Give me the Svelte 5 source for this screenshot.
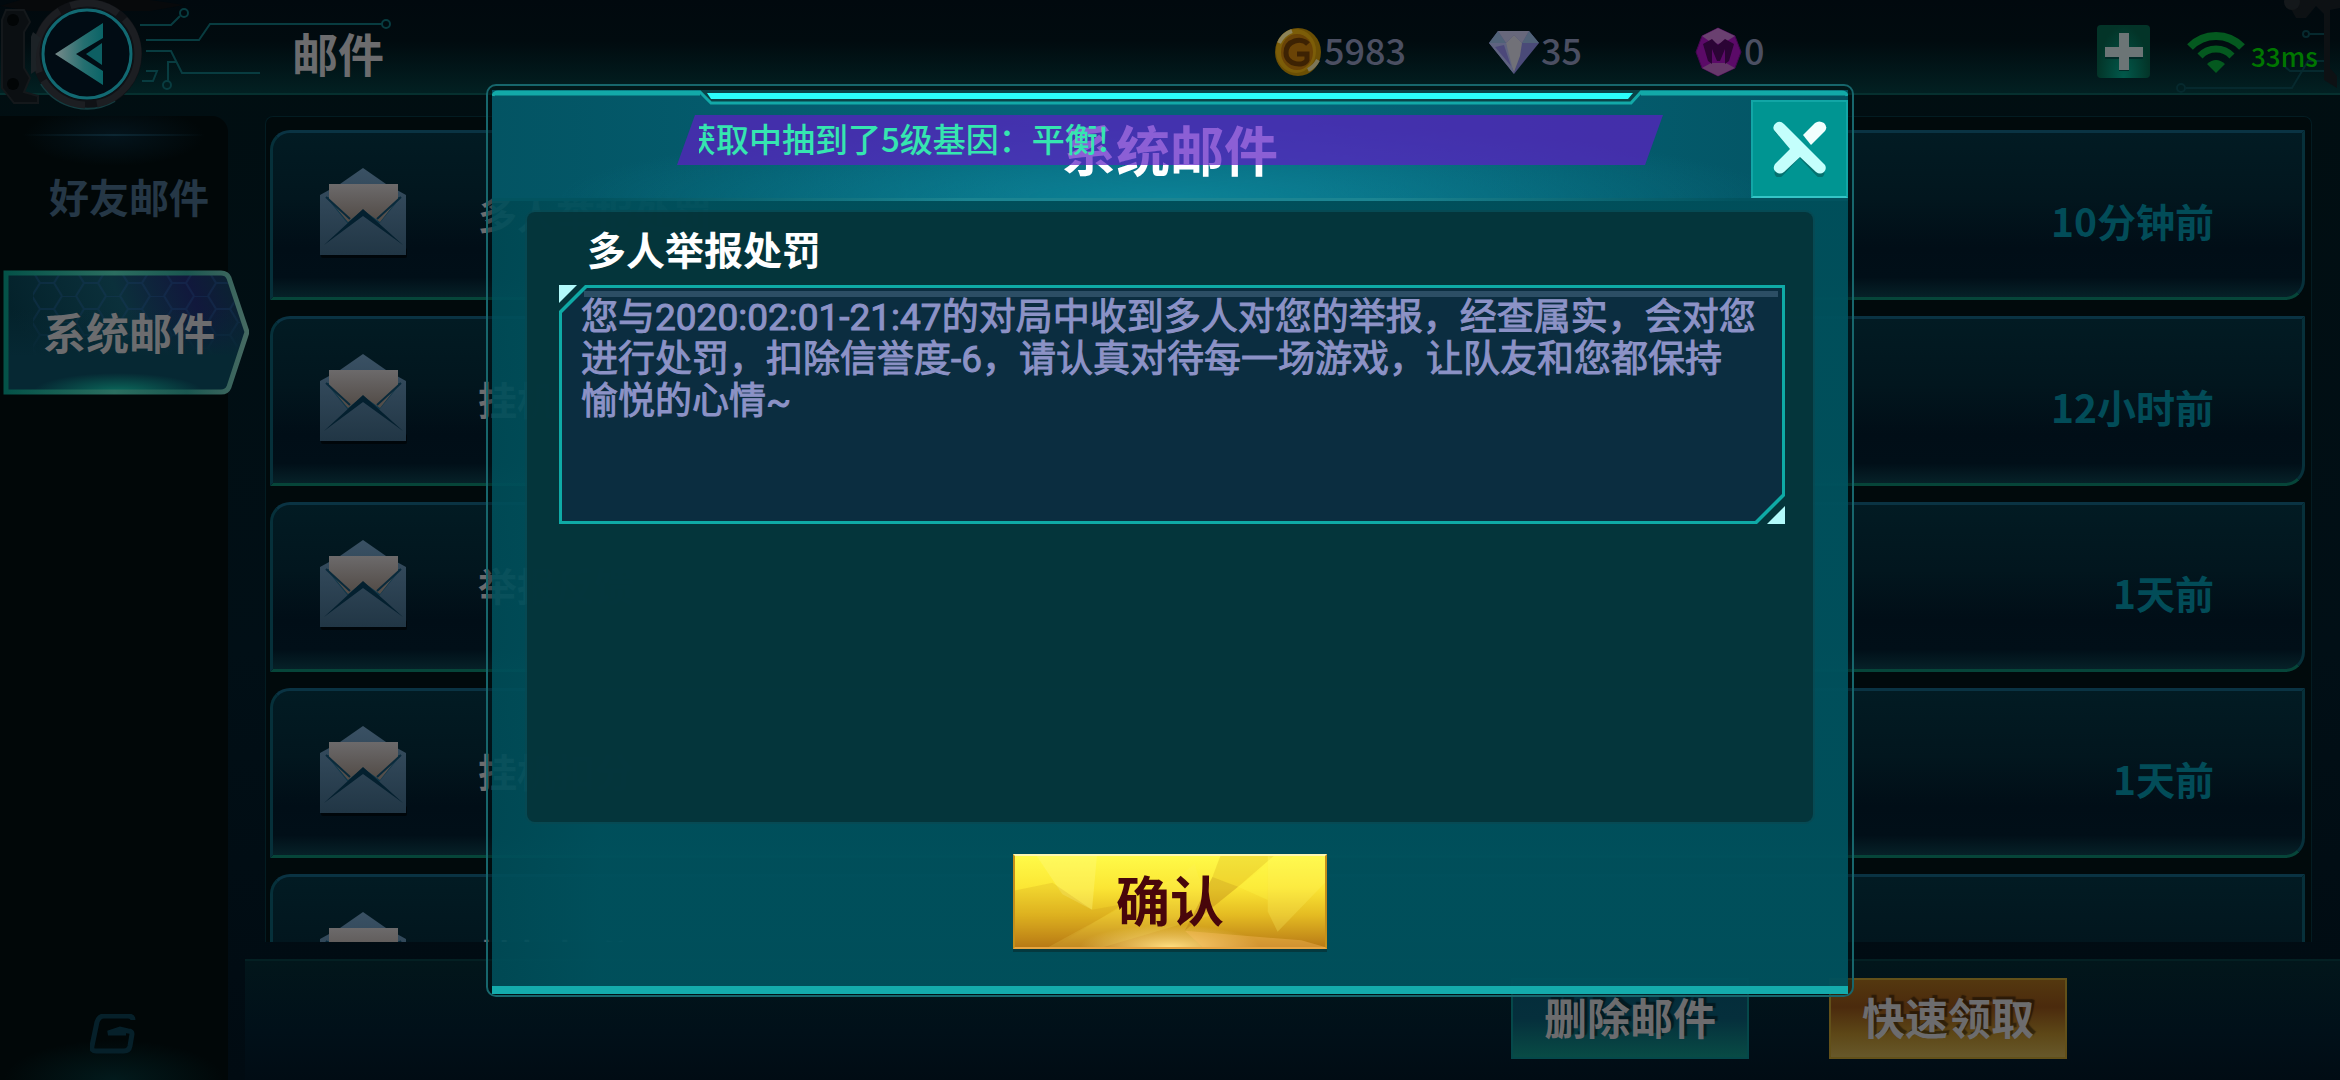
<script lang="ts">
  type Mail = { title: string; time: string };

  const mails: Mail[] = [
    { title: "多人举报处罚", time: "10分钟前" },
    { title: "挂机扣分", time: "12小时前" },
    { title: "举报反馈", time: "1天前" },
    { title: "挂机扣分", time: "1天前" },
    { title: "挂机扣分", time: "" },
  ];

  const tabs = ["好友邮件", "系统邮件"];

  const message =
    "您与2020:02:01-21:47的对局中收到多人对您的举报，经查属实，会对您\n" +
    "进行处罚，扣除信誉度-6，请认真对待每一场游戏，让队友和您都保持\n" +
    "愉悦的心情~";

  let activeTab = $state("系统邮件");
  let open = $state(true);

  function close() {
    open = false;
  }
</script>

<div class="screen">
  <header class="topbar">
    <svg class="circuit left" width="400" height="112" viewBox="0 0 400 112" aria-hidden="true">
      <path d="M0 6 L20 0 H150 L185 5 L150 11 H30 Z" fill="#07090b" />
      <path d="M6 10 L24 10 L30 22 L24 32 V68 L30 78 L24 92 L38 96 V103 H14 L2 88 V20 Z" fill="#0b0f12" stroke="#14181b" stroke-width="2" />
      <circle cx="13" cy="20" r="6" fill="#020506" />
      <circle cx="13" cy="84" r="6" fill="#020506" />
      <g fill="none" stroke="#083c40" stroke-width="2">
        <path d="M140 25 H171 L180 16" />
        <circle cx="184" cy="13" r="4" />
        <path d="M146 40 H199 L210 24 H382" />
        <circle cx="386" cy="24" r="4" />
        <path d="M146 51 H171 L182 73 H260" />
        <path d="M176 62 H168 V81" />
        <circle cx="167" cy="85" r="4" />
        <path d="M146 71 H157 L153 81 H142" />
      </g>
    </svg>

    <button class="back" aria-label="返回">
      <svg width="112" height="112" viewBox="0 0 112 112">
        <defs>
          <linearGradient id="arrow" x1="0" x2="1">
            <stop offset="0" stop-color="#788a8a" />
            <stop offset="0.6" stop-color="#256f70" />
            <stop offset="1" stop-color="#0a6467" />
          </linearGradient>
        </defs>
        <circle cx="56" cy="54" r="55" fill="#101216" />
        <path d="M10 84 A55 55 0 0 0 84 101" fill="none" stroke="#143c40" stroke-width="2" />
        <circle cx="56" cy="54" r="51" fill="none" stroke="#1c1e22" stroke-width="7" stroke-dasharray="70 12 50 9" />
        <path d="M2 32 L10 38 A50 50 0 0 0 6 70 L0 74 A56 56 0 0 1 2 32Z" fill="#1c2226" />
        <circle cx="56" cy="54" r="46" fill="#030c10" />
        <circle cx="56" cy="54" r="44" fill="#010c14" stroke="#126972" stroke-width="3" />
        <path d="M24 54 L72 23 V38 L45 54 L72 71 V85 Z" fill="url(#arrow)" />
        <path d="M55 54 L71 43 V65 Z" fill="#0d5f63" />
      </svg>
    </button>
    <h1>邮件</h1>

    <div class="currencies">
      <div class="currency">
        <svg width="48" height="50" viewBox="0 0 48 50" aria-hidden="true">
          <ellipse cx="24" cy="25" rx="23" ry="24" fill="#6b4f04" />
          <ellipse cx="22" cy="24" rx="20" ry="22" fill="#7c5d08" />
          <ellipse cx="23" cy="25" rx="16" ry="18" fill="#6a4306" />
          <path d="M5 16 A22 23 0 0 1 18 4" fill="none" stroke="#8d8358" stroke-width="4" />
          <path d="M34 43 A22 23 0 0 0 44 33" fill="none" stroke="#7d7658" stroke-width="4" />
          <path d="M34 17 C28 10 12 13 12 26 C12 38 30 40 33 33 V27 H23" fill="none" stroke="#3d2203" stroke-width="5" />
        </svg>
        <span>5983</span>
      </div>
      <div class="currency">
        <svg width="50" height="44" viewBox="0 0 50 44" aria-hidden="true">
          <path d="M9 1 H40 L50 13 L25 44 L0 13 Z" fill="#4a4a78" />
          <path d="M9 1 L17 13 H0 Z M40 1 L33 13 H50 Z" fill="#506278" />
          <path d="M9 1 H40 L33 13 L25 5 L17 13 Z" fill="#68687c" />
          <path d="M17 13 L25 5 L33 13 L31 26 L25 42 L18 26 Z" fill="#717178" />
          <path d="M0 13 H17 L25 44 Z" fill="#5f6380" />
          <path d="M6 17 L15 15 L22 36 Z" fill="#4c487a" />
        </svg>
        <span>35</span>
      </div>
      <div class="currency">
        <svg width="47" height="50" viewBox="0 0 47 50" aria-hidden="true">
          <path d="M23 1 L40 9 L46 25 L40 41 L23 49 L7 41 L1 25 L7 9 Z" fill="#5b0a68" stroke="#43064f" />
          <path d="M23 1 L40 9 L32 14 L23 17 L14 14 L7 9 Z" fill="#6a4070" />
          <path d="M7 41 L16 36 H31 L40 41 L23 49 Z" fill="#66386a" />
          <path d="M8 17 L17 12 L23 18 L30 12 L39 17 L34 34 L30 37 V22 L25 34 H22 L17 22 V37 L13 34 Z" fill="#2b0435" />
        </svg>
        <span>0</span>
      </div>
    </div>

    <button class="plus" aria-label="充值">
      <svg width="38" height="38" viewBox="0 0 38 38">
        <path d="M14 3 H24 V16 H38 V26 H24 V38 H14 V26 H0 V16 H14 Z" fill="#012c28" />
        <path d="M14 0 H24 V14 H38 V24 H24 V37 H14 V24 H0 V14 H14 Z" fill="#6c7576" />
      </svg>
    </button>
    <div class="network">
      <svg width="58" height="42" viewBox="0 0 58 42" aria-hidden="true">
        <g fill="none" stroke="#04591f">
          <path d="M3 16 A36 36 0 0 1 55 16" stroke-width="8" />
          <path d="M13 25 A22 22 0 0 1 45 25" stroke-width="7" />
        </g>
        <path d="M20 33 Q29 25 38 33 L29 42 Z" fill="#04591f" />
      </svg>
      <span>33ms</span>
    </div>

    <svg class="circuit right" width="170" height="96" viewBox="0 0 170 96" aria-hidden="true">
      <g fill="none" stroke="#06292e" stroke-width="2">
        <circle cx="11" cy="88" r="4" />
        <path d="M16 88 H122 L138 61 H154" />
        <circle cx="136" cy="34" r="3" />
        <path d="M139 34 H154 M114 66 L120 71 H154" />
      </g>
      <path d="M116 0 H170 V8 L160 10 V68 L167 76 V88 L154 80 V14 L146 6 L136 18 H126 Z" fill="#0d1114" />
      <circle cx="122" cy="2" r="8" fill="#14181b" />
    </svg>
  </header>

  <main>
    <aside>
      <nav>
        {#each tabs as tab}
          <button class="tab" class:active={activeTab === tab} onclick={() => (activeTab = tab)}>
            {#if activeTab === tab}
              <svg width="246" height="126" viewBox="0 0 246 126" aria-hidden="true">
                <defs>
                  <linearGradient id="tabFill" x1="0" x2="1" y1="0.2" y2="0">
                    <stop offset="0" stop-color="#04222b" />
                    <stop offset="0.45" stop-color="#0b303b" />
                    <stop offset="0.75" stop-color="#11183c" />
                    <stop offset="1" stop-color="#08262e" />
                  </linearGradient>
                  <linearGradient id="tabFade" x1="0" x2="0" y1="0" y2="1">
                    <stop offset="0.3" stop-color="#062833" stop-opacity="0" />
                    <stop offset="0.7" stop-color="#062833" />
                  </linearGradient>
                  <linearGradient id="tabEdge" x1="0" x2="1">
                    <stop offset="0" stop-color="#045248" />
                    <stop offset="0.45" stop-color="#2b6e60" />
                    <stop offset="0.75" stop-color="#1b5750" />
                    <stop offset="1" stop-color="#466a62" />
                  </linearGradient>
                  <radialGradient id="tabGlow" cx="0.5" cy="1" r="0.5">
                    <stop offset="0" stop-color="#0b6a5c" />
                    <stop offset="1" stop-color="#0b6a5c" stop-opacity="0" />
                  </radialGradient>
                  <pattern id="hex" width="44" height="26" patternUnits="userSpaceOnUse">
                    <path d="M0 13 H7 L15 0 H29 L37 13 H44 M7 13 L15 26 M37 13 L29 26" fill="none" stroke="#1b3d66" stroke-opacity="0.3" stroke-width="2" />
                  </pattern>
                </defs>
                <path d="M3 3 H220 Q224 3 226 7 L243 62 L226 118 Q224 122 220 122 H3 Z" fill="url(#tabFill)" />
                <path d="M30 4 H222 L240 62 L226 100 H30 Z" fill="url(#hex)" />
                <path d="M3 3 H224 L243 62 L224 122 H3 Z" fill="url(#tabFade)" />
                <rect x="30" y="84" width="170" height="38" fill="url(#tabGlow)" />
                <path d="M3 3 H218 Q224 3 226 8 L244 62 L226 117 Q224 122 218 122 H3 Z" fill="none" stroke="url(#tabEdge)" stroke-width="5" />
              </svg>
            {/if}
            <span>{tab}</span>
          </button>
        {/each}
      </nav>
      <svg class="logo" width="46" height="40" viewBox="0 0 46 40" aria-hidden="true">
        <path d="M43 6 Q43 2 38 2 H14 Q9 2 7 8 L2 32 Q1 37 6 37 H34 Q39 37 40 32 L42 20 Q42 17 38 17 L30 15 L18 19 H36" fill="none" stroke="#06202a" stroke-width="5" />
      </svg>
    </aside>

    <section class="content">
      <div class="list-panel">
        <ul>
          {#each mails as mail}
            <li class="mail">
              <svg width="88" height="92" viewBox="0 0 88 92" aria-hidden="true">
                <defs>
                  <linearGradient id="envelope" x1="0" x2="0" y1="0" y2="1">
                    <stop offset="0" stop-color="#3a5164" />
                    <stop offset="1" stop-color="#213645" />
                  </linearGradient>
                  <linearGradient id="paper" x1="0" x2="0" y1="0" y2="1">
                    <stop offset="0" stop-color="#6c6a6b" />
                    <stop offset="1" stop-color="#514a45" />
                  </linearGradient>
                </defs>
                <rect x="1" y="80" width="86" height="10" rx="2" fill="#00060a" />
                <path d="M43 0 L66 16 L86 27 V87 H0 V27 L20 16 Z" fill="url(#envelope)" />
                <path d="M6 29 L28 56 L43 42 L59 56 L81 29" fill="#12384a" />
                <path d="M9 16 H78 V31 L60 54 L43 42 L28 54 L9 31 Z" fill="url(#paper)" />
                <path d="M43 41 L83 77 L43 48 L4 77 Z" fill="#04202f" />
                <path d="M30 51 L6 29 M57 51 L81 29" stroke="#0a2a3b" stroke-width="2" />
              </svg>
              <span class="mail-title">{mail.title}</span>
              <time>{mail.time}</time>
            </li>
          {/each}
        </ul>
      </div>
      <footer>
        <button class="action delete">删除邮件</button>
        <button class="action claim">快速领取</button>
      </footer>
    </section>
  </main>

  {#if open}
    <div class="overlay">
      <div class="dialog" role="dialog" aria-labelledby="dialog-title">
        <div class="dialog-body">
          <div class="dialog-head">
            <svg class="rail" viewBox="0 0 1356 20" preserveAspectRatio="none" aria-hidden="true">
              <path d="M208 0 L219 14 H1139 L1149 0 Z" fill="#0a4348" />
              <path d="M215 3 H1141 L1136 9 H219 Z" fill="#2bfdfb" />
              <path d="M1 6 Q2 2 6 2 H208 L219 13 H1139 L1149 2 H1350 Q1354 2 1355 6" fill="none" stroke="#13a9a8" stroke-width="3" />
              <path d="M2 4 H208 M1149 4 H1354" stroke="#13a9a8" stroke-width="3" />
            </svg>
            <h2 id="dialog-title">系统邮件</h2>
            <button class="close" aria-label="关闭" onclick={close}>
              <svg width="56" height="56" viewBox="0 0 56 56">
                <g fill="none" stroke-linecap="round">
                  <path d="M7 9 L48 52" stroke="#04716f" stroke-width="9" />
                  <path d="M7 52 L26 32" stroke="#04716f" stroke-width="9" />
                </g>
                <path d="M2 9 Q0 5 4 2 Q8 -1 12 3 L53 44 Q55 48 52 51 Q48 54 44 51 L28 36 L12 51 Q8 54 4 51 Q0 48 3 43 L18 28 Z" fill="#c4fffc" />
                <path d="M31 14 L43 2 Q47 -1 52 2 Q56 6 53 10 L39 24 Z" fill="#f2fffe" />
              </svg>
            </button>
            <div class="marquee"><p>获取中抽到了5级基因：平衡!</p></div>
          </div>

          <div class="panel">
            <h3>多人举报处罚</h3>
            <div class="message-box">
              <i class="corner top"></i>
              <div class="message-edge">
                <div class="message">
                  <p>{message}</p>
                </div>
              </div>
              <i class="corner bottom"></i>
            </div>
          </div>

          <div class="dialog-foot">
            <button class="confirm" onclick={close}>
              <svg viewBox="0 0 314 95" preserveAspectRatio="none" aria-hidden="true">
                <path d="M22 0 H83 L78 56 L48 40 Z" fill="#fffa80" opacity="0.35" />
                <path d="M0 36 L38 28 L78 56 L110 50 L40 95 H0 Z" fill="#b97a10" opacity="0.16" />
                <path d="M34 95 L170 18 L182 8 L186 22 L205 60 L90 95 Z" fill="#fff36e" opacity="0.14" />
                <path d="M208 0 H262 L226 32 L200 22 Z" fill="#d3a41a" opacity="0.28" />
                <path d="M200 22 L226 32 L190 62 L172 78 Z" fill="#a8690c" opacity="0.3" />
                <path d="M262 4 L226 32 L256 46 V0 Z" fill="#fff84a" opacity="0.3" />
                <path d="M256 0 H314 V28 L266 79 L256 58 Z" fill="#fff668" opacity="0.25" />
                <path d="M172 78 L290 88 L314 95 H190 Z" fill="#ffc063" opacity="0.35" />
              </svg>
              <span>确认</span>
            </button>
          </div>
        </div>
      </div>
    </div>
  {/if}
</div>

<style>
  :global(body) {
    background: #010b10;
  }

  .screen {
    position: relative;
    display: flex;
    flex-direction: column;
    height: 100vh;
    overflow: hidden;
    background: linear-gradient(#010e11, #010f16 60%, #010b12);
    color: #6c6c6e;
    font-family: "Noto Sans CJK SC", "Noto Sans", sans-serif;
    font-weight: 700;
  }

  button {
    padding: 0;
    border: none;
    background: none;
    color: inherit;
    font: inherit;
    cursor: pointer;
  }

  h1,
  h2,
  h3,
  p,
  ul {
    margin: 0;
    padding: 0;
    font-weight: inherit;
  }

  svg {
    display: block;
    flex-shrink: 0;
  }

  /* top bar */
  .topbar {
    position: relative;
    z-index: 1;
    display: flex;
    align-items: center;
    box-sizing: border-box;
    height: 95px;
    padding: 10px 22px 0 31px;
    border-bottom: 2px solid #06302f;
    background: linear-gradient(#01090e, #010b0f 45%, #022022);
  }

  .circuit {
    position: absolute;
    top: 0;
  }

  .circuit.left {
    left: 0;
  }

  .circuit.right {
    right: 0;
  }

  .back {
    position: relative;
    height: 112px;
    padding-top: 4px;
  }

  .topbar h1 {
    margin-left: 149px;
    font-size: 46px;
    line-height: 60px;
  }

  .currencies {
    display: grid;
    grid-template-columns: 215px 206px 402px;
    margin-left: auto;
    color: #4b4f62;
    font-size: 36px;
    line-height: 48px;
    font-weight: 500;
  }

  .currency {
    display: flex;
    align-items: center;
    gap: 2px;
  }

  .currency span {
    padding-bottom: 5px;
  }

  .plus {
    display: flex;
    align-items: center;
    justify-content: center;
    width: 53px;
    height: 53px;
    margin-right: 37px;
    border-radius: 4px;
    background: radial-gradient(ellipse at bottom, #015a4c, #033428 70%);
  }

  .network {
    position: relative;
    z-index: 1;
    display: flex;
    align-items: center;
    gap: 6px;
    color: #007600;
    font-size: 26px;
    line-height: 32px;
    font-weight: 500;
  }

  .network span {
    width: 67px;
    padding-top: 8px;
  }

  /* layout */
  main {
    display: flex;
    flex: 1;
    min-height: 0;
    padding-top: 21px;
  }

  aside {
    display: flex;
    flex-direction: column;
    align-items: flex-start;
    flex-shrink: 0;
    width: 228px;
    margin-right: 17px;
    border-radius: 0 16px 0 0;
    background:
      radial-gradient(ellipse 110px 40px at 50% 100%, #021a1c, transparent),
      #010708;
  }

  nav {
    width: 100%;
    padding-top: 18px;
    background: radial-gradient(ellipse 90px 30px at 50% 20px, #04141c, transparent);
  }

  nav::before {
    content: "";
    display: block;
    width: 182px;
    height: 2px;
    margin: 0 auto;
    background: linear-gradient(90deg, transparent, #0c2733, transparent);
  }

  .tab {
    position: relative;
    display: flex;
    align-items: center;
    box-sizing: border-box;
    width: 228px;
    height: 134px;
    padding: 0 0 14px 49px;
    color: #253746;
    font-size: 40px;
    line-height: 52px;
    white-space: nowrap;
  }

  .tab.active {
    width: 246px;
    height: 126px;
    margin-left: 3px;
    padding: 0 0 4px 40px;
    color: #6c6c6e;
    font-size: 43px;
  }

  .tab svg {
    position: absolute;
    inset: 0;
  }

  .tab span {
    position: relative;
  }

  .logo {
    margin: auto 0 26px 90px;
  }

  .content {
    display: flex;
    flex-direction: column;
    flex: 1;
    min-width: 0;
  }

  .list-panel {
    flex: 1;
    min-height: 0;
    margin: 0 28px 17px 20px;
    padding: 13px 6px 0 4px;
    overflow: hidden;
    border: 1px solid #031c22;
    border-bottom: none;
    border-radius: 8px 8px 0 0;
    background: #010a0c;
  }

  ul {
    display: flex;
    flex-direction: column;
    gap: 16px;
    list-style: none;
  }

  .mail {
    display: flex;
    align-items: center;
    flex-shrink: 0;
    box-sizing: border-box;
    height: 170px;
    padding: 0 88px 0 47px;
    border: 3px solid;
    border-color: #0a3343 #07303a #064539 #06303a;
    border-radius: 20px 0 20px 0;
    background: linear-gradient(#021b23, #02161e 40%, #010e17 70%, #010f18 88%, #062128);
  }

  .mail svg {
    margin-bottom: 3px;
  }

  .mail-title {
    margin: 0 0 7px 70px;
    font-size: 39px;
    line-height: 52px;
  }

  .mail time {
    margin: 10px 0 0 auto;
    color: #024c58;
    font-size: 39px;
    line-height: 52px;
  }

  footer {
    display: flex;
    justify-content: flex-end;
    gap: 80px;
    box-sizing: border-box;
    height: 121px;
    padding: 17px 273px 0 0;
    border-top: 2px solid #042023;
    background: linear-gradient(#02161b, #011019 60%, #010c14);
  }

  .action {
    box-sizing: border-box;
    width: 238px;
    height: 81px;
    padding-bottom: 5px;
    font-size: 43px;
    line-height: 60px;
    text-shadow: 3px -3px 1px rgba(0, 0, 0, 0.45);
  }

  .delete {
    border: 2px solid #05484a;
    background: linear-gradient(#042c3a, #052f3c 50%, #084b45);
  }

  .claim {
    border: 2px solid #625019;
    background: linear-gradient(#54380f, #4b2a0d 35%, #5d4717 70%, #67582a);
  }

  /* dialog */
  .overlay {
    position: absolute;
    inset: 0;
    z-index: 2;
    display: flex;
    justify-content: center;
    padding: 84px 0 83px;
  }

  .dialog {
    display: flex;
    box-sizing: border-box;
    width: 60%;
    max-width: 1368px;
    padding: 4px 4px 1px;
    border: 2px solid #17666c;
    border-radius: 10px;
    background: rgba(1, 14, 18, 0.4);
  }

  .dialog-body {
    display: flex;
    flex-direction: column;
    flex: 1;
    min-width: 0;
    border-bottom: 8px solid #14abac;
    background: linear-gradient(90deg, rgba(0, 82, 94, 0.85), rgba(0, 82, 94, 0.95) 8%);
  }

  .dialog-head {
    position: relative;
    display: grid;
    grid-template-columns: 97px 1fr 97px;
    align-items: end;
    box-sizing: border-box;
    height: 111px;
    border-bottom: 3px solid;
    border-image: linear-gradient(90deg, #02535f 8%, #1c8592 35%, #1c8592 65%, #02535f 92%) 1;
    background:
      radial-gradient(ellipse 45% 70% at 50% 100%, rgba(16, 146, 166, 0.65), transparent),
      linear-gradient(90deg, #035463, #056378 40%, #056378 60%, #035463);
  }

  .rail {
    position: absolute;
    top: 0;
    left: 0;
    width: 100%;
    height: 20px;
  }

  h2 {
    grid-column: 2;
    align-self: center;
    padding-top: 10px;
    color: #fff;
    font-size: 54px;
    line-height: 68px;
    text-align: center;
  }

  .close {
    display: flex;
    align-items: center;
    justify-content: center;
    box-sizing: border-box;
    height: 98px;
    border: 2px solid #12a6a6;
    border-bottom-color: #35c4c6;
    background: #009592;
  }

  .marquee {
    position: absolute;
    top: 25px;
    left: 185px;
    right: 185px;
    height: 50px;
    padding: 0 22px;
    background: rgba(93, 29, 196, 0.71);
    clip-path: polygon(18px 0, 100% 0, calc(100% - 18px) 100%, 0 100%);
  }

  .marquee p {
    display: flex;
    overflow: hidden;
    color: #35e6b0;
    font-size: 33px;
    line-height: 46px;
    font-weight: 500;
    white-space: nowrap;
    text-indent: -16px;
  }

  .panel {
    flex: 1;
    min-height: 0;
    margin: 11px 35px 0;
    padding: 0 28px 0 32px;
    border-radius: 8px;
    background: rgba(4, 52, 58, 0.95);
    box-shadow: 0 0 0 2px rgba(10, 72, 80, 0.6);
  }

  h3 {
    padding-left: 28px;
    color: #fff;
    font-size: 39px;
    line-height: 73px;
  }

  .message-box {
    position: relative;
  }

  .message-edge {
    padding: 3px;
    background: #0faaa6;
    clip-path: polygon(26px 0, 100% 0, 100% calc(100% - 28px), calc(100% - 28px) 100%, 0 100%, 0 26px);
  }

  .message {
    min-height: 233px;
    background:
      linear-gradient(#2c4e65, #2c4e65) 22px 3px / calc(100% - 26px) 6px no-repeat,
      #0b2d40;
    clip-path: polygon(25px 0, 100% 0, 100% calc(100% - 27px), calc(100% - 27px) 100%, 0 100%, 0 25px);
  }

  .message p {
    padding: 9px 0 0 19px;
    color: #8c92c6;
    font-family: Roboto, "Noto Sans CJK SC", sans-serif;
    font-size: 37px;
    line-height: 42px;
    font-weight: 400;
    white-space: pre-line;
    -webkit-text-stroke: 1px #8c92c6;
  }

  .corner {
    position: absolute;
    width: 18px;
    height: 18px;
    background: #b2fafb;
  }

  .corner.top {
    top: 0;
    left: 0;
    clip-path: polygon(0 0, 100% 0, 0 100%);
  }

  .corner.bottom {
    right: 0;
    bottom: 0;
    clip-path: polygon(100% 0, 100% 100%, 0 100%);
  }

  .dialog-foot {
    display: flex;
    justify-content: center;
    padding: 32px 0 37px;
  }

  .confirm {
    position: relative;
    box-sizing: border-box;
    width: 314px;
    height: 95px;
    padding-bottom: 5px;
    border: 2px solid;
    border-color: #fff6b0 #c58f1a #e8a540 #c58f1a;
    background:
      radial-gradient(ellipse 90px 22px at 50% 100%, #ffdf80, transparent),
      linear-gradient(#fffa48, #fbe634 35%, #e4bb22 65%, #b87a16);
    box-shadow: 0 3px 0 #04393f;
    color: #48060b;
    font-size: 54px;
    line-height: 72px;
  }

  .confirm svg {
    position: absolute;
    inset: 0;
    width: 100%;
    height: 100%;
  }

  .confirm span {
    position: relative;
  }
</style>
